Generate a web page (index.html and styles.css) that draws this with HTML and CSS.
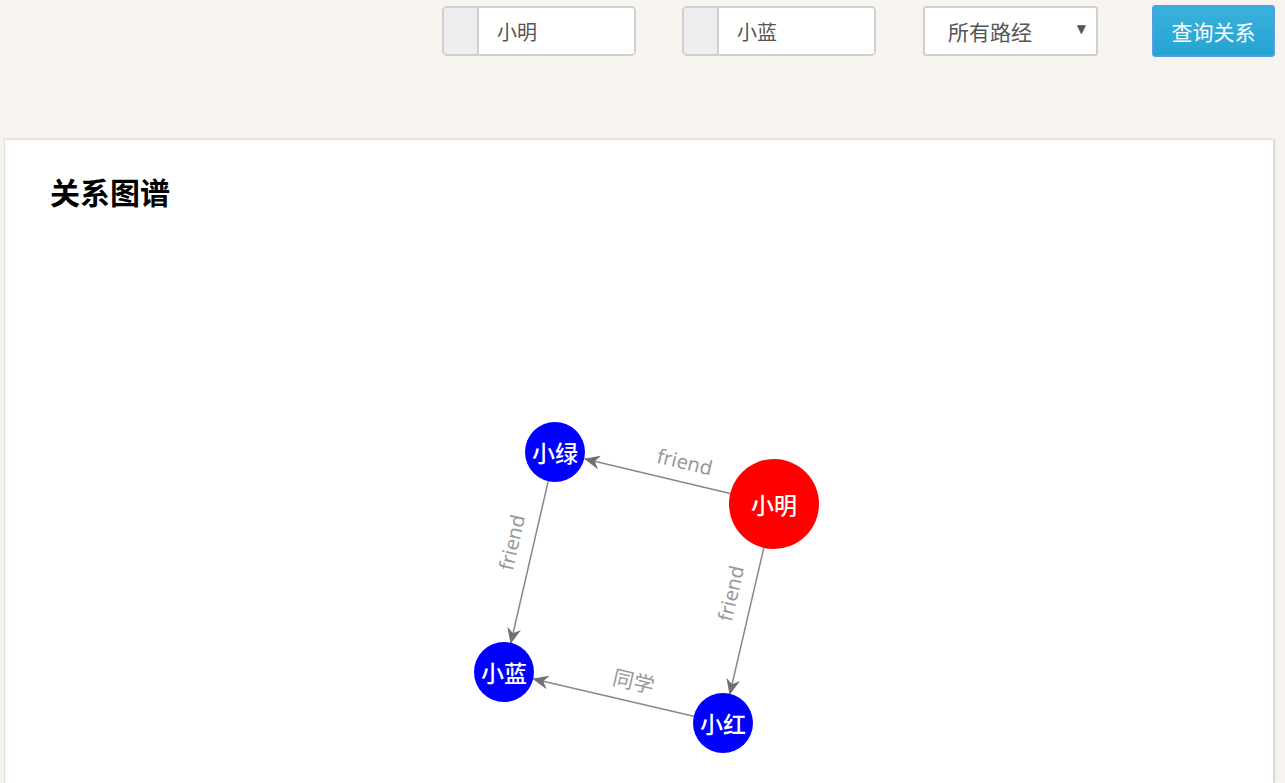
FILE: index.html
```html
<!DOCTYPE html>
<html lang="zh">
<head>
<meta charset="utf-8">
<title>关系图谱</title>
<link rel="stylesheet" href="styles.css">
</head>
<body>
<div class="toolbar">
  <div class="input-group">
    <span class="addon"></span>
    <input class="field" type="text" value="小明">
  </div>
  <div class="input-group">
    <span class="addon"></span>
    <input class="field" type="text" value="小蓝">
  </div>
  <div class="select">
    <span class="select-text">所有路经</span>
    <span class="caret">▼</span>
  </div>
  <button class="btn">查询关系</button>
</div>
<div class="card">
  <h2 class="card-title">关系图谱</h2>
  <div class="chart">
    <svg class="graph" width="1268" height="575" viewBox="0 0 1268 575">
      <defs>
        <marker id="arr" viewBox="0 0 16 14" markerWidth="16" markerHeight="14" refX="15" refY="7" orient="auto" markerUnits="userSpaceOnUse">
          <path d="M0,0 L16,7 L0,14 L5,7 Z" fill="#707070"/>
        </marker>
      </defs>
      <g transform="translate(-5,-208)">
        <g class="edges" stroke="#888" stroke-width="1.5" fill="none">
          <line x1="730.2" y1="493.6" x2="585" y2="459" marker-end="url(#arr)"/>
          <line x1="548.2" y1="481.2" x2="510.8" y2="643" marker-end="url(#arr)"/>
          <line x1="763.8" y1="547.8" x2="729.8" y2="694" marker-end="url(#arr)"/>
          <line x1="693.8" y1="716.2" x2="533.5" y2="679" marker-end="url(#arr)"/>
        </g>
        <g class="edge-labels">
          <text transform="translate(683,469) rotate(13.4)">friend</text>
          <text transform="translate(519,544) rotate(-77)">friend</text>
          <text transform="translate(738,595) rotate(-77)">friend</text>
          <text class="cjk" transform="translate(632,689) rotate(13.1)">同学</text>
        </g>
        <g class="nodes">
          <circle cx="555" cy="452" r="30" fill="#0000ff"/>
          <circle cx="774" cy="504" r="45" fill="#ff0000"/>
          <circle cx="504" cy="672" r="30" fill="#0000ff"/>
          <circle cx="723" cy="723" r="30" fill="#0000ff"/>
        </g>
        <g class="node-labels">
          <text x="555" y="462">小绿</text>
          <text x="774" y="514">小明</text>
          <text x="504" y="682">小蓝</text>
          <text x="723" y="733">小红</text>
        </g>
      </g>
    </svg>
  </div>
</div>
</body>
</html>
```
FILE: styles.css
```css
* { box-sizing: border-box; }
html, body { margin: 0; padding: 0; }
body {
  background: #f7f4ef;
  font-family: "Noto Sans CJK SC", "Noto Sans", sans-serif;
  width: 1285px;
  height: 783px;
  overflow: hidden;
}
.toolbar {
  height: 139px;
  display: flex;
  align-items: flex-start;
  justify-content: flex-end;
  padding: 6px 10px 0 0;
}
.input-group {
  display: flex;
  width: 194px;
  height: 50px;
  border: 2px solid #cfcfcf;
  border-radius: 5px;
  background: #fff;
  overflow: hidden;
  margin-right: 46px;
}
.addon {
  width: 35px;
  background: #eeeeee;
  border-right: 2px solid #cfcfcf;
  flex: none;
}
.field {
  border: none;
  outline: none;
  flex: 1;
  min-width: 0;
  padding: 0 0 0 18px;
  font-family: "Noto Sans CJK SC", sans-serif;
  font-size: 20px;
  color: #555;
  background: #fff;
}
.select {
  width: 175px;
  height: 50px;
  border: 2px solid #cfcfcf;
  border-radius: 3px;
  background: #fff;
  display: flex;
  align-items: center;
  padding: 0 10px 0 23px;
  margin-right: 54px;
  margin-left: 1px;
}
.select-text {
  flex: 1;
  font-size: 21px;
  color: #555;
}
.caret {
  font-size: 12px;
  color: #555;
  font-family: "DejaVu Sans", sans-serif;
  margin-top: -4px;
}
.btn {
  width: 123px;
  height: 52px;
  margin-top: -1px;
  border: 1px solid #5a9ce8;
  border-radius: 3px;
  background: linear-gradient(#3ab2dc, #25a3d1);
  box-shadow: inset 0 0 0 1px #39a9dc;
  color: #fff;
  font-family: "Noto Sans CJK SC", sans-serif;
  font-size: 21px;
  padding: 0;
}
.card {
  margin: 0 12px 0 4px;
  width: 1269px;
  height: 644px;
  background: #fff;
  border-left: 1px solid #e4e1dc;
  border-top: 1px solid #e4e1dc;
  box-shadow: 2px 0 2px rgba(0, 0, 0, 0.12);
  padding-top: 34px;
}
.card-title {
  margin: 0;
  padding-left: 45px;
  font-size: 30px;
  line-height: 34px;
  font-weight: 700;
  color: #000;
  font-family: "Noto Sans CJK SC", sans-serif;
}
.chart {
  height: 575px;
}
.graph { display: block; }
.edge-labels text {
  font-family: "Noto Sans", "Noto Sans CJK SC", sans-serif;
  font-size: 20px;
  fill: #999;
  text-anchor: middle;
}
.edge-labels text.cjk {
  font-family: "Noto Sans CJK SC", sans-serif;
  font-size: 21px;
}
.node-labels text {
  font-family: "Noto Sans CJK SC", sans-serif;
  font-size: 23px;
  font-weight: 500;
  fill: #fff;
  text-anchor: middle;
}
```
